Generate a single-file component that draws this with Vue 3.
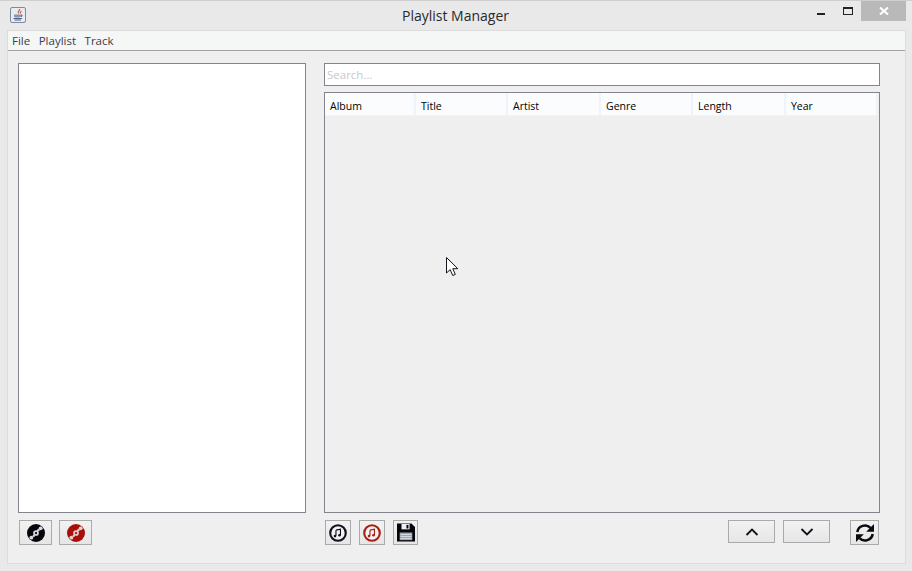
<template>
  <div class="window">
    <header class="titlebar">
      <span class="app-icon">
        <svg width="16" height="16" viewBox="0 0 16 16">
          <rect x="0.5" y="0.5" width="15" height="15" rx="1.5" fill="#e8ebf2" stroke="#7d8aa0" />
          <path d="M9.500 2c1 1.500-2.500 2.500-1 4.500M11 4c.5 1-1.500 1.500-.5 2.500" fill="none" stroke="#d2592f" stroke-width="1.200" />
          <path d="M4 7.500h6.500v1.500c0 1-1 1.500-2 1.500h-2.500c-1 0-2-.5-2-1.500z" fill="#8496b0" />
          <path d="M10.500 8h1.500v1.300h-1.500M3.500 11.500h8.500M4.500 13h6.500" fill="none" stroke="#4f6488" stroke-width="1" />
        </svg>
      </span>
      <span class="title">Playlist Manager</span>
      <div class="controls">
        <span class="ctl ctl-min"><i></i></span>
        <span class="ctl ctl-max"><i></i></span>
        <span class="ctl-close">
          <svg width="10" height="8" viewBox="0 0 10 8">
            <path d="M1 .5l8 7M9 .5l-8 7" stroke="#fff" stroke-width="2" fill="none" />
          </svg>
        </span>
      </div>
    </header>

    <div class="client">
      <nav class="menubar">
        <span v-for="item in menus" :key="item">{{ item }}</span>
      </nav>

      <main class="body">
        <section class="left">
          <div class="playlists"></div>
          <div class="toolbar">
            <button class="btn btn-disc" type="button" title="Add playlist">
              <svg width="18" height="18" viewBox="0 0 24 24">
                <circle cx="12" cy="12" r="12" fill="#05050a" />
                <circle cx="5.800" cy="18.200" r="2.600" fill="#d8dbe6" />
                <circle cx="9" cy="15.800" r="1.600" fill="#d8dbe6" />
                <circle cx="18.200" cy="5.800" r="2.600" fill="#d8dbe6" />
                <circle cx="15" cy="8.200" r="1.600" fill="#d8dbe6" />
                <circle cx="12" cy="12" r="3.800" fill="#d8dbe6" />
                <circle cx="12" cy="12" r="1.500" fill="#05050a" />
              </svg>
            </button>
            <button class="btn btn-disc" type="button" title="Remove playlist">
              <svg width="18" height="18" viewBox="0 0 24 24">
                <circle cx="12" cy="12" r="12" fill="#a80f0a" />
                <circle cx="5.800" cy="18.200" r="2.600" fill="#e6cfcf" />
                <circle cx="9" cy="15.800" r="1.600" fill="#e6cfcf" />
                <circle cx="18.200" cy="5.800" r="2.600" fill="#e6cfcf" />
                <circle cx="15" cy="8.200" r="1.600" fill="#e6cfcf" />
                <circle cx="12" cy="12" r="3.800" fill="#e6cfcf" />
                <circle cx="12" cy="12" r="1.500" fill="#a80f0a" />
              </svg>
            </button>
          </div>
        </section>

        <section class="right">
          <input class="search" type="text" placeholder="Search…" />
          <div class="table">
            <div class="thead">
              <div v-for="col in columns" :key="col" class="th">{{ col }}</div>
            </div>
          </div>
          <div class="toolbar toolbar-right">
            <button class="btn btn-icon" type="button" title="Add track">
              <svg width="18" height="18" viewBox="0 0 22 22">
                <circle cx="11" cy="11" r="9.500" fill="#f2f2f4" stroke="#10101a" stroke-width="2.600" />
                <path d="M8.500 7.500l5.500-1.200v7.200M8.500 7.500v7" fill="none" stroke="#10101a" stroke-width="1.400" />
                <circle cx="7.300" cy="14.800" r="1.600" fill="#10101a" />
                <circle cx="12.800" cy="13.800" r="1.600" fill="#10101a" />
              </svg>
            </button>
            <button class="btn btn-icon" type="button" title="Remove track">
              <svg width="18" height="18" viewBox="0 0 22 22">
                <circle cx="11" cy="11" r="9.500" fill="#f2f2f4" stroke="#a8200f" stroke-width="2.600" />
                <path d="M8.500 7.500l5.500-1.200v7.200M8.500 7.500v7" fill="none" stroke="#a8200f" stroke-width="1.400" />
                <circle cx="7.300" cy="14.800" r="1.600" fill="#a8200f" />
                <circle cx="12.800" cy="13.800" r="1.600" fill="#a8200f" />
              </svg>
            </button>
            <button class="btn btn-icon btn-save" type="button" title="Save">
              <svg width="18" height="19" viewBox="0 0 20 20">
                <path d="M0 0h16l4 4v16H0z" fill="#05050a" />
                <rect x="5" y="0.500" width="9" height="6" fill="#f0f0f0" />
                <rect x="10.500" y="1.500" width="2.200" height="4" fill="#05050a" />
                <rect x="3" y="10" width="14" height="8.500" fill="#9ba3ae" />
                <path d="M4 12.200h12M4 14.500h12M4 16.800h12" stroke="#e0e2e6" stroke-width="1" />
              </svg>
            </button>
            <div class="spacer"></div>
            <button class="btn btn-wide" type="button" title="Move up">
              <svg width="14" height="8" viewBox="0 0 14 8">
                <path d="M1.500 7L7 1.500 12.500 7" fill="none" stroke="#10101a" stroke-width="1.800" />
              </svg>
            </button>
            <button class="btn btn-wide" type="button" title="Move down">
              <svg width="14" height="8" viewBox="0 0 14 8">
                <path d="M1.500 1L7 6.500 12.500 1" fill="none" stroke="#10101a" stroke-width="1.800" />
              </svg>
            </button>
            <button class="btn btn-refresh" type="button" title="Refresh">
              <svg width="20" height="20" viewBox="0 0 20 20">
                <path d="M2.300 9A7.800 7.800 0 0 1 15.500 4.800" fill="none" stroke="#0a0a0f" stroke-width="2.600" />
                <path d="M19 1v7.800h-7.800z" fill="#0a0a0f" />
                <path d="M17.700 11A7.800 7.800 0 0 1 4.500 15.200" fill="none" stroke="#0a0a0f" stroke-width="2.600" />
                <path d="M1 19v-7.800h7.800z" fill="#0a0a0f" />
              </svg>
            </button>
          </div>
        </section>
      </main>
    </div>

    <svg class="cursor" width="13" height="20" viewBox="0 0 13 20">
      <path d="M.5.500v15.500l3.700-3.400 2.500 5.900 2.600-1.100-2.500-5.700h5z" fill="#fff" stroke="#14141c" stroke-width="1" />
    </svg>
  </div>
</template>

<script setup>
const menus = ['File', 'Playlist', 'Track']
const columns = ['Album', 'Title', 'Artist', 'Genre', 'Length', 'Year']
</script>

<style>
html,
body {
  margin: 0;
  background: #e9e9e9;
}
</style>

<style scoped>
.window {
  position: relative;
  display: flex;
  flex-direction: column;
  box-sizing: border-box;
  width: 912px;
  height: 571px;
  padding: 0 6px 7px 7px;
  border-top: 1px solid #cfcfcf;
  background: #e9e9e9;
  font-family: "Open Sans", "Liberation Sans", sans-serif;
  overflow: hidden;
}

.titlebar {
  position: relative;
  display: flex;
  flex: none;
  align-items: center;
  justify-content: center;
  height: 29px;
}

.app-icon {
  position: absolute;
  left: 3px;
  top: 6px;
  display: flex;
}

.title {
  margin-right: 2px;
  font-size: 14px;
  color: #2a2a2a;
}

.controls {
  position: absolute;
  top: 0;
  right: 0;
  display: flex;
  align-items: flex-start;
}

.ctl {
  display: block;
  width: 29px;
  height: 20px;
}

.ctl-min i {
  display: block;
  width: 8px;
  height: 2px;
  margin: 12px 0 0 14px;
  background: #222;
}

.ctl-max i {
  display: block;
  box-sizing: border-box;
  width: 10px;
  height: 8px;
  margin: 6px 0 0 11px;
  border: 1px solid #222;
  border-top-width: 2px;
}

.ctl-close {
  display: flex;
  align-items: center;
  justify-content: center;
  width: 45px;
  height: 20px;
  background: #b9b9b9;
}

.client {
  display: flex;
  flex: 1;
  flex-direction: column;
  min-height: 0;
  border: 1px solid #dcdcdc;
  background: #efefef;
}

.menubar {
  display: flex;
  flex: none;
  gap: 8.500px;
  box-sizing: border-box;
  height: 20px;
  padding: 0 4px;
  border-bottom: 1px solid #a0a0a0;
  background: #f5f6f6;
  font-size: 11.500px;
  line-height: 20px;
  color: #3d3d4a;
}

.body {
  display: flex;
  flex: 1;
  gap: 18px;
  min-height: 0;
  padding: 12px 25px 0 10px;
}

.left {
  display: flex;
  flex: none;
  flex-direction: column;
  width: 288px;
}

.right {
  display: flex;
  flex: 1;
  flex-direction: column;
  min-width: 0;
}

.playlists {
  flex: 1;
  border: 1px solid #83858c;
  background: #fff;
}

.search {
  flex: none;
  box-sizing: border-box;
  height: 23px;
  margin: 0 0 6px;
  padding: 0 2px;
  border: 1px solid #83858c;
  border-radius: 0;
  outline: none;
  background: #fff;
  font: 11.500px "Open Sans", "Liberation Sans", sans-serif;
}

.search::placeholder {
  color: #c8c8c8;
  opacity: 1;
}

.table {
  flex: 1;
  box-sizing: border-box;
  border: 1px solid #83858c;
  background: #efefef;
}

.thead {
  display: grid;
  grid-template-columns: 91px 92px 93px 92px 93px 92px;
}

.th {
  box-sizing: border-box;
  height: 23px;
  padding: 4px 0 0 5px;
  border-right: 2px solid #edf4fb;
  border-bottom: 1px solid #edf4fb;
  background: #fbfcfd;
  font-size: 10.500px;
  line-height: 18px;
  color: #000;
}

.toolbar {
  display: flex;
  flex: none;
  align-items: flex-start;
  gap: 7px;
  height: 50px;
  padding: 7px 0 0 1px;
  box-sizing: border-box;
}

.toolbar-right {
  gap: 8px;
  padding-right: 1px;
}

.spacer {
  flex: 1;
}

.btn {
  display: flex;
  flex: none;
  align-items: center;
  justify-content: center;
  box-sizing: border-box;
  padding: 0;
  border: 1px solid #aaa;
  border-radius: 0;
  background: linear-gradient(#f2f2f2, #e6e6e6);
  cursor: default;
}

.btn-disc {
  width: 33px;
  height: 25px;
}

.btn-icon {
  width: 26px;
  height: 25px;
}

.btn-save {
  width: 25px;
}

.btn-wide {
  width: 47px;
  height: 23px;
}

.btn-refresh {
  width: 29px;
  height: 25px;
  margin-left: 12px;
}

.cursor {
  position: absolute;
  left: 446px;
  top: 256px;
}
</style>
